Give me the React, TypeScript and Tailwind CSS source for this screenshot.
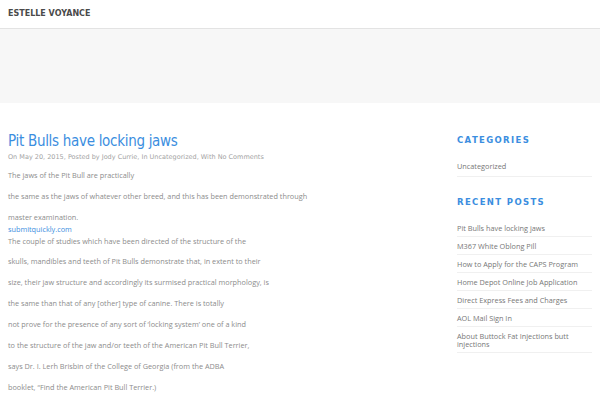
import React from 'react'

const bodyLines = [
  'The jaws of the Pit Bull are practically',
  'the same as the jaws of whatever other breed, and this has been demonstrated through',
]

const moreLines = [
  'skulls, mandibles and teeth of Pit Bulls demonstrate that, in extent to their',
  'size, their jaw structure and accordingly its surmised practical morphology, is',
  'the same than that of any [other] type of canine. There is totally',
  'not prove for the presence of any sort of \u2018locking system\u2019 one of a kind',
  'to the structure of the jaw and/or teeth of the American Pit Bull Terrier,',
  'says Dr. I. Lerh Brisbin of the College of Georgia (from the ADBA',
  'booklet, \u201cFind the American Pit Bull Terrier.)',
]

const recentPosts = [
  'Pit Bulls have locking jaws',
  'M367 White Oblong Pill',
  'How to Apply for the CAPS Program',
  'Home Depot Online Job Application',
  'Direct Express Fees and Charges',
  'AOL Mail Sign In',
  'About Buttock Fat Injections butt injections',
]

const WidgetTitle: React.FC<{ children: React.ReactNode }> = ({ children }) => (
  <h3 className="text-[8.5px] font-bold tracking-[0.16em] text-[#3b8ee0] uppercase leading-[12px] font-['DejaVu_Sans',sans-serif]">
    {children}
  </h3>
)

export default function App() {
  return (
    <div className="w-[600px] h-[400px] overflow-hidden bg-white font-['Open_Sans',sans-serif]">
      {/* Header */}
      <header className="h-[29px] border-b border-[#e3e3e3] shadow-[0_1px_1px_rgba(0,0,0,0.04)] flex items-center px-2">
        <span className="text-[8px] font-semibold text-[#4a4a4a] font-['DejaVu_Sans',sans-serif]">
          ESTELLE VOYANCE
        </span>
      </header>

      {/* Banner */}
      <div className="h-[74px] bg-[#f7f7f7]" />

      {/* Content */}
      <div className="flex px-2 pt-[29px]">
        <main className="flex-1">
          <h1 className="text-[15px] leading-[18px] text-[#3b8ee0] tracking-[-0.02em] font-['DejaVu_Sans_Condensed','DejaVu_Sans',sans-serif]">
            Pit Bulls have locking jaws
          </h1>
          <div className="mt-[2px] text-[6.5px] leading-[10px] text-[#a3a3a3] font-['DejaVu_Sans',sans-serif]">
            On May 20, 2015, Posted by Jody Currie, In Uncategorized, With No Comments
          </div>
          <div className="mt-[7px] text-[7.3px] leading-[12px] text-[#8c8c8c]">
            {bodyLines.map((l) => (
              <p key={l} className="mb-[9px]">{l}</p>
            ))}
            <p className="mb-[8px]">
              master examination.
              <br />
              <a className="text-[#3b8ee0]">submitquickly.com</a>
              <br />
              The couple of studies which have been directed of the structure of the
            </p>
            {moreLines.map((l) => (
              <p key={l} className="mb-[9px]">{l}</p>
            ))}
          </div>
        </main>

        <aside className="w-[135px] shrink-0 pt-[2px]">
          <WidgetTitle>Categories</WidgetTitle>
          <ul className="mt-[15px] text-[7.3px] leading-[10px] text-[#777]">
            <li className="pb-[5px] border-b border-[#f0f0f0]">Uncategorized</li>
          </ul>
          <div className="mt-[19px]">
            <WidgetTitle>Recent Posts</WidgetTitle>
          </div>
          <ul className="mt-[16px] text-[7.3px] leading-[8px] text-[#777]">
            {recentPosts.map((p) => (
              <li key={p} className="pt-[5px] pb-[4px] border-b border-[#f0f0f0] first:pt-0">
                {p}
              </li>
            ))}
          </ul>
        </aside>
      </div>
    </div>
  )
}
